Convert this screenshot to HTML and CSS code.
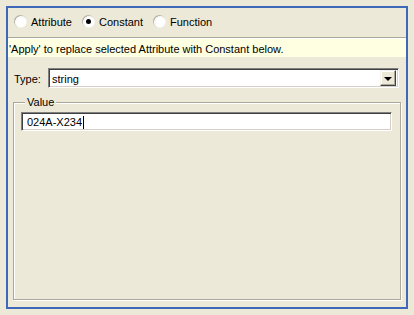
FILE: index.html
```html
<!DOCTYPE html>
<html>
<head>
<meta charset="utf-8">
<link rel="stylesheet" href="styles.css">
</head>
<body>
<div class="panel">
  <div class="radios">
    <label class="radio"><span class="dot"></span><span>Attribute</span></label>
    <label class="radio"><span class="dot on"></span><span>Constant</span></label>
    <label class="radio"><span class="dot"></span><span>Function</span></label>
  </div>
  <div class="info">'Apply' to replace selected Attribute with Constant below.</div>
  <div class="type-row">
    <span class="type-label">Type:</span>
    <div class="combo">
      <span class="combo-text">string</span>
      <span class="combo-btn"><span class="arrow"></span></span>
    </div>
  </div>
  <fieldset class="group">
    <legend class="legend">Value</legend>
    <div class="input"><span>024A-X234</span><span class="caret"></span></div>
  </fieldset>
</div>
</body>
</html>
```
FILE: styles.css
```css
html, body {
  margin: 0;
  padding: 0;
}
body {
  background: #ece9d8;
  font-family: "Liberation Sans", Arial, sans-serif;
  font-size: 11px;
  color: #000;
  padding: 6px;
  width: 402px;
  height: 303px;
}
.panel {
  box-sizing: border-box;
  width: 402px;
  height: 303px;
  border: 2px solid #3d69b8;
  display: flex;
  flex-direction: column;
}
.radios {
  box-sizing: border-box;
  height: 30px;
  padding: 0 0 2px 6px;
  display: flex;
  align-items: center;
  gap: 10px;
  border-bottom: 1px solid #aca899;
}
.radio {
  display: flex;
  align-items: center;
  gap: 4px;
}
.dot {
  box-sizing: border-box;
  width: 13px;
  height: 13px;
  border-radius: 50%;
  background:
    radial-gradient(circle at 55% 55%, #ffffff 0 45%, #f0efe8 60%, transparent 62%),
    linear-gradient(135deg, #9c9b95 0%, #d8d6cc 55%, #ffffff 100%);
  display: flex;
  align-items: center;
  justify-content: center;
}
.dot.on::after {
  content: "";
  width: 5px;
  height: 5px;
  border-radius: 50%;
  background: #000;
}
.info {
  box-sizing: border-box;
  height: 19px;
  background: #ffffe1;
  border-top: 1px solid #ffffff;
  padding: 3px 0 0 1px;
  line-height: 14px;
}
.type-row {
  display: flex;
  align-items: center;
  margin: 11px 7px 0 5px;
  gap: 4px;
}
.type-label {
  width: 30px;
  padding-left: 1px;
  padding-top: 2px;
}
.combo {
  box-sizing: border-box;
  flex: 1;
  height: 20px;
  background: #fff;
  border-top: 1px solid #808080;
  border-left: 1px solid #808080;
  border-right: 1px solid #ffffff;
  border-bottom: 1px solid #ffffff;
  box-shadow: inset 1px 1px 0 #404040, inset -1px -1px 0 #d4d0c8;
  display: flex;
  align-items: center;
  padding: 0 2px 0 3px;
}
.combo-text {
  flex: 1;
  padding-top: 2px;
}
.combo-btn {
  box-sizing: border-box;
  width: 16px;
  height: 16px;
  background: #ece9d8;
  border-top: 1px solid #f4f3ee;
  border-left: 1px solid #f4f3ee;
  border-right: 1px solid #404040;
  border-bottom: 1px solid #404040;
  box-shadow: inset -1px -1px 0 #aca899, inset 1px 1px 0 #ffffff;
  display: flex;
  align-items: center;
  justify-content: center;
}
.arrow {
  width: 0;
  height: 0;
  border-left: 4px solid transparent;
  border-right: 4px solid transparent;
  border-top: 4px solid #000;
  margin-top: 1px;
}
.group {
  flex: 1;
  margin: 8px 5px 7px 5px;
  padding: 3px 8px 0 7px;
  border: 1px solid #aca899;
  box-shadow: inset 1px 1px 0 #fff, 1px 1px 0 #fff;
  min-width: 0;
}
.legend {
  padding: 0 2px;
  margin-left: 4px;
  background: #ece9d8;
  line-height: 13px;
}
.input {
  box-sizing: border-box;
  height: 19px;
  background: #fff;
  border-top: 1px solid #808080;
  border-left: 1px solid #808080;
  border-right: 1px solid #ffffff;
  border-bottom: 1px solid #ffffff;
  box-shadow: inset 1px 1px 0 #404040, inset -1px -1px 0 #d4d0c8;
  display: flex;
  align-items: center;
  padding: 1px 0 0 5px;
}
.caret {
  width: 1px;
  height: 13px;
  background: #000;
  margin-left: 1px;
}
```
